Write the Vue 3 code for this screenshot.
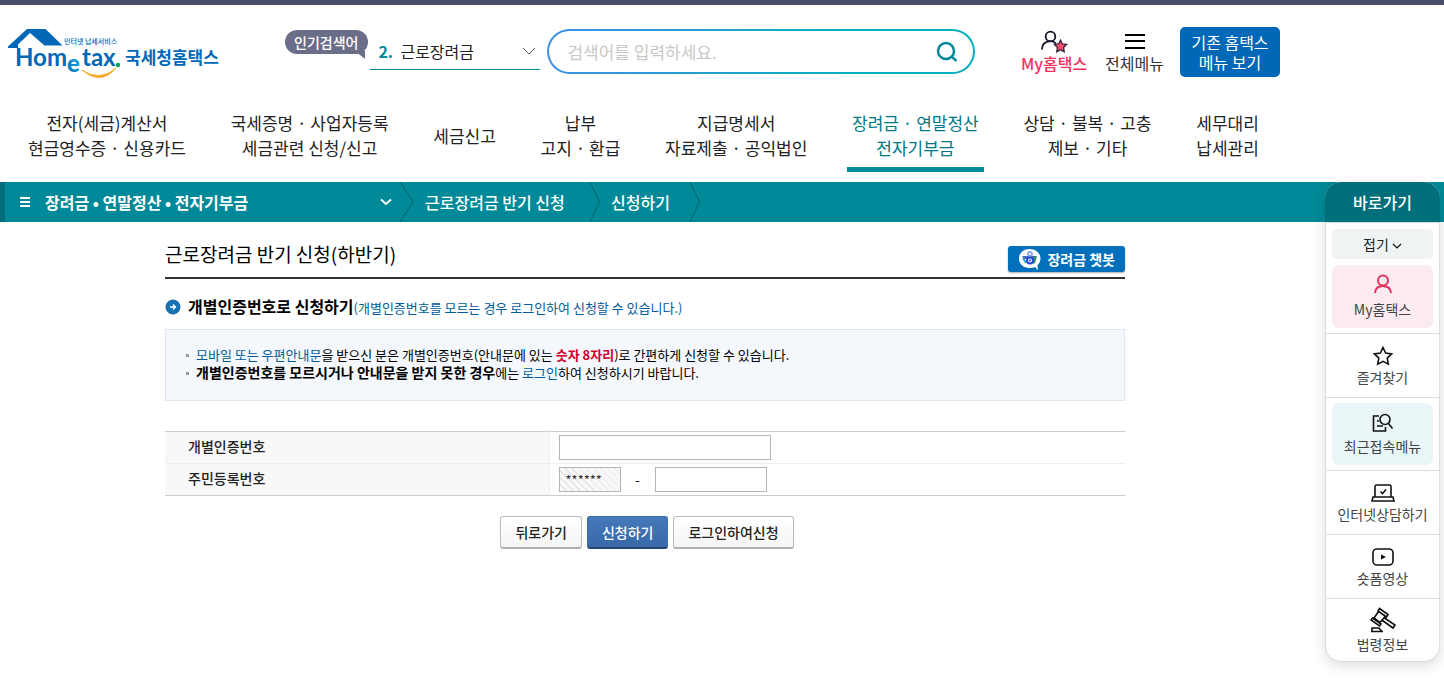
<script setup>
import { ref } from 'vue'

const keyword = ref('근로장려금')
const menus = [
  { lines: ['전자(세금)계산서', '현금영수증 · 신용카드'] },
  { lines: ['국세증명 · 사업자등록', '세금관련 신청/신고'] },
  { lines: ['세금신고'] },
  { lines: ['납부', '고지 · 환급'] },
  { lines: ['지급명세서', '자료제출 · 공익법인'] },
  { lines: ['장려금 · 연말정산', '전자기부금'], active: true },
  { lines: ['상담 · 불복 · 고충', '제보 · 기타'] },
  { lines: ['세무대리', '납세관리'] },
]
</script>

<template>
  <div class="page">
    <header>
      <div class="container">
        <div class="top">
          <a class="logo" href="#" aria-label="국세청홈택스">
            <svg width="212" height="52" viewBox="0 0 212 52">
              <defs>
                <linearGradient id="egrad" x1="0" y1="1" x2="1" y2="0">
                  <stop offset="0" stop-color="#0068b7" />
                  <stop offset="1" stop-color="#14b9e8" />
                </linearGradient>
              </defs>
              <path d="M0 19.500 19 2H37.500L54.500 18.500H36.500L22 6 10 17.500V21H0Z" fill="#0068b7" />
              <text x="7" y="39" class="word">Hom</text>
              <text x="59" y="45" class="word e">e</text>
              <text x="74" y="39" class="word">tax</text>
              <circle cx="110" cy="38" r="2.200" fill="#00a651" />
              <path d="M74 43Q92 55 108 41Q93 59 74 43Z" fill="#f9a51a" stroke="#f9a51a" stroke-width=".7" />
              <text x="56" y="17" class="small">인터넷 납세서비스</text>
              <text x="117" y="37" class="kor">국세청홈택스</text>
            </svg>
          </a>

          <label class="bubble" for="popular">인기검색어</label>
          <div class="popular">
            <span class="rank">2.</span>
            <select id="popular" v-model="keyword">
              <option>근로장려금</option>
              <option>연말정산</option>
            </select>
            <svg width="14" height="8" viewBox="0 0 14 8" class="line"><path d="m1 1 6 6 6-6" /></svg>
          </div>

          <form class="search" @submit.prevent>
            <input type="text" placeholder="검색어를 입력하세요." aria-label="검색어">
            <button type="submit" aria-label="검색">
              <svg width="22" height="22" viewBox="0 0 22 22"><circle cx="10" cy="10" r="8" /><path d="m15.500 15.500 5 4.500" /></svg>
            </button>
          </form>

          <a class="util my" href="#">
            <svg width="28" height="24" viewBox="0 0 28 24">
              <g fill="none" stroke="#14142b" stroke-width="1.800">
                <circle cx="10.500" cy="7.500" r="4.800" /><path d="M2 20.500c0-9 10-10 14-6" />
              </g>
              <path d="m20.500 11 1.900 3.900 4.200.6-3 3 .7 4.300-3.800-2-3.800 2 .7-4.300-3-3 4.200-.6Z" fill="#ff4b72" stroke="#2b1d30" stroke-width="1.200" />
            </svg>
            <span>My홈택스</span>
          </a>
          <a class="util" href="#">
            <svg width="24" height="24" viewBox="0 0 24 24"><path d="M2 6h20M2 12h20M2 19h20" stroke="#000" stroke-width="2" /></svg>
            <span>전체메뉴</span>
          </a>
          <button class="old" type="button">기존 홈택스<br>메뉴 보기</button>
        </div>

        <nav class="gnb" aria-label="주메뉴">
          <a v-for="m in menus" :key="m.lines[0]" href="#" :class="{ active: m.active }">
            <span v-for="l in m.lines" :key="l">{{ l }}</span>
          </a>
        </nav>
      </div>
    </header>

    <div class="crumbs">
      <button type="button" class="current">
        <svg width="10" height="10" viewBox="0 0 10 10"><path d="M0 1h10M0 5h10M0 9h10" stroke="#fff" stroke-width="2" /></svg>
        <span>장려금 • 연말정산 • 전자기부금</span>
        <svg class="chev" width="12" height="8" viewBox="0 0 12 8"><path d="m1 1.500 5 4.500 5-4.500" fill="none" stroke="#fff" stroke-width="2" /></svg>
      </button>
      <svg class="sep" width="14" height="40" viewBox="0 0 14 40"><path d="m0 0 13 20L0 40" /></svg>
      <a href="#">근로장려금 반기 신청</a>
      <svg class="sep" width="10" height="40" viewBox="0 0 10 40"><path d="m0 0 9.500 20L0 40" /></svg>
      <a href="#">신청하기</a>
      <svg class="sep" width="10" height="40" viewBox="0 0 10 40"><path d="m0 0 9.500 20L0 40" /></svg>
    </div>

    <div class="container">
      <main>
        <div class="title">
          <h1>근로장려금 반기 신청(하반기)</h1>
          <button type="button" class="bot">
            <svg width="24" height="22" viewBox="0 0 24 22">
              <path d="M11.500 1C5.500 1 1 5 1 10.500S5.500 20 11.500 20c2 0 4-.3 5.500-1l3 3-.5-5C21.500 15.500 22.500 12.500 22.500 10.500 22.500 5 17.500 1 11.500 1Z" fill="#fff" />
              <path d="M4 8h14v2l-2 1H6Z" fill="#4a67c8" /><path d="m15 9 4-1-2 7-3 1Z" fill="#249348" />
              <path d="m5 10 3 5" stroke="#27a8c9" stroke-width="2" />
              <circle cx="12" cy="6" r="3" fill="#8fa6ec" /><circle cx="12" cy="6" r="1" fill="#fff" />
              <circle cx="12" cy="12.500" r="3" fill="#fff" stroke="#2647dc" stroke-width="2" /><circle cx="12" cy="12.500" r="1" fill="#2647dc" />
            </svg>
            장려금 챗봇
          </button>
        </div>

        <h2>
          <svg width="16" height="16" viewBox="0 0 16 16"><circle cx="8" cy="8" r="7" fill="#1673b5" stroke="#155f99" /><path d="M5 8h5M8 5.500 10.500 8 8 10.500" fill="none" stroke="#fff" stroke-width="1.300" /></svg>
          <span>개별인증번호로 신청하기<small>(개별인증번호를 모르는 경우 로그인하여 신청할 수 있습니다.)</small></span>
        </h2>

        <ul class="notice">
          <li><em>모바일 또는 우편안내문</em>을 받으신 분은 개별인증번호(안내문에 있는 <b class="red">숫자 8자리</b>)로 간편하게 신청할 수 있습니다.</li>
          <li><b class="wide">개별인증번호를 모르시거나 안내문을 받지 못한 경우</b>에는 <em>로그인</em>하여 신청하시기 바랍니다.</li>
        </ul>

        <form @submit.prevent>
          <table>
            <tbody>
              <tr>
                <th scope="row"><label for="code">개별인증번호</label></th>
                <td><input id="code" type="text" class="code"></td>
              </tr>
              <tr>
                <th scope="row"><label for="rrn">주민등록번호</label></th>
                <td>
                  <div class="rrn">
                    <input id="rrn" type="text" class="masked" value="******" readonly>
                    <span>-</span>
                    <input type="text" class="back" aria-label="주민등록번호 뒷자리">
                  </div>
                </td>
              </tr>
            </tbody>
          </table>
          <div class="actions">
            <button type="button">뒤로가기</button>
            <button type="submit" class="primary">신청하기</button>
            <button type="button">로그인하여신청</button>
          </div>
        </form>
      </main>
    </div>

    <aside class="quick" aria-label="바로가기">
      <h2>바로가기</h2>
      <div class="cell first">
        <button type="button">접기 <svg width="10" height="7" viewBox="0 0 10 7"><path d="m1 1 4 4 4-4" /></svg></button>
        <a href="#" class="pink">
          <svg width="20" height="20" viewBox="0 0 20 20"><circle cx="10" cy="6.500" r="5" /><path d="M2 19c0-9.500 16-9.500 16 0" /></svg>
          My홈택스
        </a>
      </div>
      <div class="cell">
        <a href="#">
          <svg width="20" height="20" viewBox="0 0 20 20"><path d="m10 1.500 2.600 5.600 6 .8-4.400 4.200 1.100 6L10 15.300l-5.300 2.800 1.100-6L1.400 7.900l6-.8Z" /></svg>
          즐겨찾기
        </a>
      </div>
      <div class="cell">
        <a href="#" class="mint">
          <svg width="22" height="20" viewBox="0 0 22 20"><path d="M7 3H1.500v15h12v-4M5 8h2M5 13h6" /><circle cx="13" cy="6.500" r="5" /><path d="m16.500 10.500 4 5" /></svg>
          최근접속메뉴
        </a>
      </div>
      <div class="cell">
        <a href="#">
          <svg width="24" height="20" viewBox="0 0 24 20"><path d="M4 14V3.500q0-1.500 1.500-1.500h13Q20 2 20 3.500V14M2 14h20l1 4H1Z" /><path d="m9.500 8.500 2 2 3.500-4" /></svg>
          인터넷상담하기
        </a>
      </div>
      <div class="cell">
        <a href="#">
          <svg width="22" height="20" viewBox="0 0 22 20"><rect x="1" y="2" width="20" height="16" rx="4" /><path d="m9 7.500 5 2.500-5 2.500Z" fill="#111" stroke="none" /></svg>
          숏폼영상
        </a>
      </div>
      <div class="cell">
        <a href="#" class="law">
          <svg width="26" height="26" viewBox="0 0 26 26"><path d="m9.500 1.500 8.500 6-1.500 2.500L8 4ZM2.500 11 11 17l-1.500 2L1 13ZM8.500 4.500 4 11l6 4.500 5.500-6.500M14.500 11l10.500 7-2 3-10.500-7.500M1 24.500h12M2 24v-3h7l2.500 3" /></svg>
          법령정보
        </a>
      </div>
    </aside>
  </div>
</template>

<style>
body { margin: 0; background: #fff; }
</style>

<style scoped>
* { box-sizing: border-box; }
.page {
  position: relative;
  min-height: 100vh;
  border-top: 5px solid #4a4e6b;
  font-family: "Noto Sans CJK KR", "Liberation Sans", sans-serif;
  font-size: 13px;
  line-height: 18px;
  color: #000;
}
button, input, select { font: inherit; color: inherit; margin: 0; }
button { cursor: pointer; }
a { color: inherit; text-decoration: none; }
h1, h2, ul { margin: 0; padding: 0; }
.container { max-width: 1290px; }

.top { display: flex; align-items: flex-start; padding: 22px 10px 0 8px; }
.logo { margin-right: 65px; flex: none; }
.logo svg { display: block; }
.word { font: 700 24px Lato, sans-serif; fill: #0068b7; }
.e { font-weight: 900; fill: url(#egrad); }
.small { font-size: 7px; font-weight: 500; fill: #0068b7; }
.kor { font-size: 17px; font-weight: 700; fill: #0068b7; }

.bubble {
  position: relative;
  flex: none;
  margin: 3px 2px 0 0;
  padding: 0 10px 0 9px;
  border-radius: 12px;
  background: #6b6e89;
  color: #fff;
  font-size: 14px;
  font-weight: 500;
  line-height: 24px;
}
.bubble::after {
  content: "";
  position: absolute;
  right: 3px;
  bottom: -5px;
  border-top: 8px solid #6b6e89;
  border-left: 10px solid transparent;
}
.popular {
  display: flex;
  align-items: center;
  flex: none;
  width: 170px;
  height: 43px;
  margin-right: 7px;
  padding: 6px 4px 0 8px;
  border-bottom: 1px solid #008998;
}
.rank { width: 22px; color: #008998; font-size: 16px; font-weight: 700; }
.popular select { flex: 1; padding: 0; border: 0; background: none; appearance: none; font-size: 16px; line-height: 24px; color: #222; }
.line { fill: none; stroke: #555; }
.search {
  display: flex;
  align-items: center;
  flex: 1;
  height: 45px;
  margin: 2px 46px 0 0;
  padding: 0 15px 0 18px;
  border: 2px solid transparent;
  border-radius: 23px;
  background: linear-gradient(#fff, #fff) padding-box, linear-gradient(90deg, #4090e8, #06b0bd 70%) border-box;
}
.search input { flex: 1; min-width: 0; padding: 0; border: 0; outline: 0; background: none; font-size: 17px; }
.search input::placeholder { color: #c8c8c8; opacity: 1; }
.search button { padding: 0; border: 0; background: none; }
.search svg { display: block; fill: none; stroke: #008998; stroke-width: 2.500; }
.util {
  display: flex;
  flex-direction: column;
  align-items: center;
  flex: none;
  margin: 2px 16px 0 0;
  font-size: 16px;
  line-height: 20px;
  color: #333;
}
.util.my { margin-right: 18px; color: #f0325f; font-weight: 500; }
.old {
  flex: none;
  width: 100px;
  height: 50px;
  padding: 0;
  border: 0;
  border-radius: 5px;
  background: #0068b7;
  color: #fff;
  font-size: 16px;
  line-height: 20px;
}

.gnb { display: flex; justify-content: space-between; margin-top: 28px; padding: 0 26px 10px 23px; }
.gnb a {
  display: flex;
  flex-direction: column;
  justify-content: center;
  align-items: center;
  height: 65px;
  padding: 0 5px 4px;
  border-bottom: 5px solid transparent;
  font-size: 17px;
  line-height: 25px;
  color: #222;
  white-space: nowrap;
}
.gnb .active { border-color: #008998; color: #007884; }

.crumbs {
  display: flex;
  align-items: center;
  height: 40px;
  border-left: 5px solid #006e7b;
  background: #008998;
  color: #fff;
  font-size: 16px;
  font-weight: 500;
}
.current {
  display: flex;
  align-items: center;
  gap: 15px;
  width: 395px;
  padding: 0 8px 0 15px;
  border: 0;
  background: none;
  font-weight: 700;
}
.chev { margin-left: auto; }
.crumbs a { padding: 0 8px 0 11px; min-width: 90px; }
.crumbs a:first-of-type { min-width: 176px; }
.sep { fill: none; stroke: #00616d; }

main { max-width: 960px; margin: 0 auto; padding-top: 24px; }
.title { display: flex; justify-content: space-between; align-items: flex-start; height: 33px; border-bottom: 2px solid #333; }
h1 { font-size: 19px; font-weight: 400; line-height: 16px; }
.bot {
  display: flex;
  align-items: center;
  gap: 5px;
  height: 26px;
  padding: 0 10px;
  border: 0;
  border-radius: 3px;
  background: #0070bd;
  box-shadow: 0 1px 2px #0005;
  color: #fff;
  font-size: 14px;
  line-height: 20px;
  font-weight: 700;
}
main h2 { display: flex; align-items: center; gap: 7px; margin: 17px 0 11px; font-size: 16px; font-weight: 700; line-height: 21px; }
small { font-size: 13px; font-weight: 400; color: #005b99; }
.notice { padding: 16px 20px 18px; border: 1px solid #dfe6f0; background: #f4f7fc; list-style: none; }
.notice li { position: relative; padding-left: 10px; }
.notice li::before { content: ""; position: absolute; left: 0; top: 8px; width: 3px; height: 3px; background: #999; }
em { font-style: normal; color: #005b99; }
.red { color: #d0002c; }
.wide { font-size: 14px; line-height: 16px; }

table { width: 100%; margin-top: 30px; border-collapse: collapse; border: solid #ccc; border-width: 1px 0; }
tr + tr { border-top: 1px solid #eee; }
th { width: 40%; padding: 0 0 3px 23px; border-right: 1px solid #eee; background: #f8f8f8; font-size: 14px; font-weight: 500; text-align: left; color: #222; }
td { height: 32px; padding: 0 9px; }
td input { display: block; height: 25px; padding: 0 6px; border: 1px solid #b5b5b5; background: #fff; }
.code { width: 212px; }
.rrn { display: flex; align-items: center; }
.rrn span { width: 34px; text-align: center; }
.masked { width: 62px; color: #333; background: repeating-linear-gradient(45deg, #f8f8f8 0 4px, #e4e4e4 4px 5px); }
.back { width: 112px; }
.actions { display: flex; justify-content: center; gap: 5px; padding: 20px 0 0 4px; }
.actions button {
  height: 33px;
  padding: 0 14px;
  border: 1px solid #bbb;
  border-bottom: 2px solid #b0b0b0;
  border-radius: 3px;
  background: linear-gradient(#fff, #f5f5f5);
  font-size: 14px;
  font-weight: 500;
  color: #222;
}
.actions .primary { border-color: #3c6eae #3c6eae #244772; background: linear-gradient(#4679b9, #386aa8); color: #fff; }

.quick {
  position: absolute;
  top: 177px;
  right: 4px;
  width: 115px;
  border: 1px solid #ddd;
  border-top: 0;
  border-radius: 16px;
  background: #fff;
  box-shadow: 0 4px 14px #0002;
  text-align: center;
}
.quick h2 { margin: 0 -1px; border-radius: 16px 16px 0 0; background: #006e7b; color: #fff; font-size: 16px; font-weight: 500; line-height: 40px; }
.cell { padding: 5px 6px; border-top: 1px solid #ddd; }
.cell:last-child { padding-bottom: 4px; }
.first { padding-top: 6px; }
.cell button { width: 100%; height: 30px; margin-bottom: 6px; padding: 0; border: 0; border-radius: 5px; background: #eff3f4; font-size: 14px; color: #222; }
.cell svg { flex: none; fill: none; stroke: #111; stroke-width: 1.600; }
.cell button svg { stroke-width: 1.200; }
.cell a { display: flex; flex-direction: column; align-items: center; justify-content: center; height: 53px; padding-top: 2px; font-size: 14px; line-height: 22px; color: #444; white-space: nowrap; }
.cell .pink, .cell .mint { height: 62px; border-radius: 7px; gap: 2px; }
.cell .pink { height: 63px; padding: 0; gap: 4px; background: #fbeaef; }
.cell .pink svg { stroke: #e5305e; stroke-width: 2; }
.mint { background: #e9f5f6; }
.cell .law { padding: 0; }
</style>
